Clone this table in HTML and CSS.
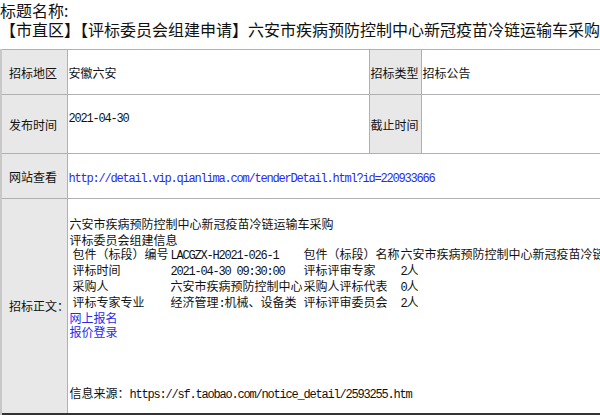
FILE: index.html
```html
<!DOCTYPE html>
<html lang="zh-CN">
<head>
<meta charset="utf-8">
<title>标题名称</title>
<link rel="stylesheet" href="styles.css">
</head>
<body>
<div class="title">
  <div class="title-line">标题名称:</div>
  <div class="title-line">【市直区】【评标委员会组建申请】六安市疾病预防控制中心新冠疫苗冷链运输车采购</div>
</div>
<table class="info">
  <colgroup>
    <col class="c-label">
    <col class="c-value">
    <col class="c-label2">
    <col class="c-rest">
  </colgroup>
  <tr class="r1">
    <th>招标地区</th>
    <td>安徽六安</td>
    <th class="label2">招标类型</th>
    <td>招标公告</td>
  </tr>
  <tr class="r2">
    <th>发布时间</th>
    <td class="date"><span class="mono">2021-04-30</span></td>
    <th class="label2">截止时间</th>
    <td></td>
  </tr>
  <tr class="r3">
    <th>网站查看</th>
    <td colspan="3"><a class="link mono" href="#">http://detail.vip.qianlima.com/tenderDetail.html?id=220933666</a></td>
  </tr>
  <tr class="r4">
    <th>招标正文：</th>
    <td colspan="3" class="content">
      <div class="line">六安市疾病预防控制中心新冠疫苗冷链运输车采购</div>
      <div class="line">评标委员会组建信息</div>
      <table class="inner">
        <tr>
          <td class="ic1">包件（标段）编号</td>
          <td class="ic2"><span class="mono">LACGZX-H2021-026-1</span></td>
          <td class="ic3">包件（标段）名称</td>
          <td class="ic4">六安市疾病预防控制中心新冠疫苗冷链运输车采购</td>
        </tr>
        <tr>
          <td>评标时间</td>
          <td><span class="mono">2021-04-30 09:30:00</span></td>
          <td>评标评审专家</td>
          <td><span class="mono">2</span>人</td>
        </tr>
        <tr>
          <td>采购人</td>
          <td>六安市疾病预防控制中心</td>
          <td>采购人评标代表</td>
          <td><span class="mono">0</span>人</td>
        </tr>
        <tr>
          <td>评标专家专业</td>
          <td>经济管理<span class="mono">:</span>机械、设备类</td>
          <td>评标评审委员会</td>
          <td><span class="mono">2</span>人</td>
        </tr>
      </table>
      <div class="links">
        <a class="link" href="#">网上报名</a>
        <a class="link" href="#">报价登录</a>
      </div>
      <div class="source">信息来源：<span class="mono">https://sf.taobao.com/notice_detail/2593255.htm</span></div>
    </td>
  </tr>
</table>
</body>
</html>
```

FILE: styles.css
```css
html, body {
  margin: 0;
  padding: 0;
  overflow: hidden;
  background: #fff;
}
body {
  font-family: "Noto Sans CJK SC", "Liberation Serif", serif;
  color: #111;
  width: 600px;
  height: 415px;
}
.title {
  font-size: 16px;
  padding-top: 1px;
  height: 48px;
  white-space: nowrap;
}
.title-line {
  height: 19px;
  line-height: 19px;
}
.mono {
  font-family: "Liberation Mono", monospace;
  letter-spacing: -1.2px;
  line-height: 12px;
}
.info {
  border-collapse: collapse;
  table-layout: fixed;
  width: 760px;
  font-size: 12px;
  border-bottom: 2px solid #333;
}
.c-label { width: 66px; }
.c-value { width: 302px; }
.c-label2 { width: 52px; }
.c-rest { width: 340px; }
.info > tbody > tr > th,
.info > tbody > tr > td {
  border: 1px solid #b0b0b0;
  padding: 0 0 0 1px;
  text-align: left;
  white-space: nowrap;
}
.info > tbody > tr > td {
  overflow: hidden;
}
.info > tbody > tr > th {
  background: #e8e8e8;
  font-weight: normal;
  padding-left: 7px;
  border-left: 2px solid #c8c8c8;
  overflow: visible;
}
.info > tbody > tr > th.label2 {
  padding-left: 1px;
  border-left: 1px solid #b0b0b0;
}
.r1 { height: 45px; }
.r2 { height: 59px; }
.r3 { height: 45px; }
.r4 { height: 215px; }
.date { vertical-align: top; padding-top: 13px !important; }
.link {
  color: #2a2aee;
  text-decoration: none;
}
.content {
  vertical-align: top;
  padding: 17px 0 0 2px !important;
}
.line {
  line-height: 16px;
  height: 16px;
}
.inner {
  border-collapse: collapse;
  table-layout: fixed;
  margin: -2px 0 0 3px;
  font-size: 12px;
}
.inner tr {
  height: 16px;
}
.inner td {
  padding: 0;
  height: 16px;
  line-height: 16px;
  white-space: nowrap;
  vertical-align: middle;
  overflow: visible;
}
.inner .ic1 { width: 98px; }
.inner .ic2 { width: 133px; }
.inner .ic3 { width: 97px; }
.inner .ic4 { width: 300px; }
.links {
  display: flex;
  flex-direction: column;
  align-items: flex-start;
  line-height: 14px;
  margin-top: 1px;
}
.source {
  margin-top: 46px;
  line-height: 16px;
}
```
